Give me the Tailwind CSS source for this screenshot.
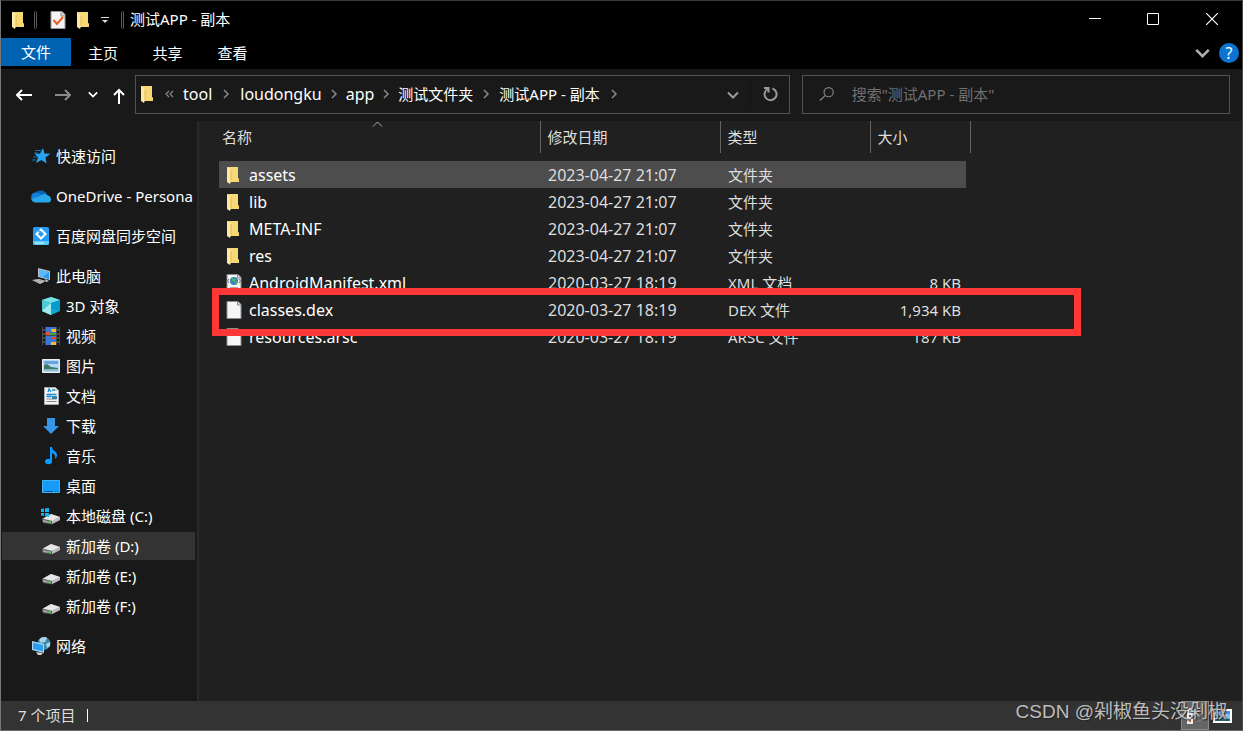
<!DOCTYPE html>
<html lang="zh-CN">
<head>
<meta charset="utf-8">
<title>测试APP - 副本</title>
<script src="https://cdn.jsdelivr.net/npm/@tailwindcss/browser@4"></script>
</head>
<body class="bg-[#191919] text-white text-[15px] leading-5 font-['Noto_Sans','Noto_Sans_CJK_SC',sans-serif]">
<svg class="hidden">
  <symbol id="folder" viewBox="0 0 14 18"><path d="M1 1h11v11l1 1v3H3z" fill="#f3cf68"/><path d="M4 1h8v11l1 1v3H4z" fill="#f8d775"/><path d="M1 1l4 2v12l-1 3-3-2z" fill="#ffe9a2"/><path d="M5 4v11" stroke="#e4b94e"/></symbol>
  <symbol id="sep" viewBox="0 0 8 10"><path d="M2 1l4 4-4 4" fill="none" stroke="#8a8a8a" stroke-width="1.5"/></symbol>
  <symbol id="down" viewBox="0 0 12 8"><path d="M1 1.500l5 5 5-5" fill="none" stroke="currentColor" stroke-width="2"/></symbol>
  <symbol id="page" viewBox="0 0 16 18"><path d="M1 .5h11l3 3v14H1z" fill="#f5f6f6" stroke="#8d8d8d"/><path d="M11.500 1v3H15" fill="#ddd" stroke="#8d8d8d"/></symbol>
  <symbol id="drive" viewBox="0 0 18 12"><path d="M0 6L9 1l9 3v3l-8 4-9-2z" fill="#8c8c8c"/><path d="M1 5.500L9 1l9 3-8 4z" fill="#e6e6e8"/><path d="M0 6l10 2v3.500L1 10z" fill="#55585a"/><path d="M1 7l8 1.500v2L1 9z" fill="#a5a8a8"/><path d="M5 9l3 .5" stroke="#22d52b" stroke-width="1.500"/><path d="M10 8l8-4v3l-8 4z" fill="#bdbdc0"/></symbol>
</svg>
<div class="flex min-h-screen flex-col border border-t-[#3a3a3a] border-r-[#4a4a4a] border-b-[#686868] border-l-[#777]">
  <header class="bg-black">
    <div class="flex h-[37px] items-center">
      <svg class="ml-[10px] h-[18px] w-[14px]"><use href="#folder"/></svg>
      <span class="ml-[9px] h-[18px] w-[3px] rounded border border-[#5c5c5c]"></span>
      <button aria-label="属性" class="ml-[13px]"><svg class="h-[18px] w-4" viewBox="0 0 16 18"><path d="M1 .5h11l3 3v14H1z" fill="#f4f4f6" stroke="#999"/><path d="M11 1v4h4" fill="#ccc" stroke="#999"/><path d="M3.500 9l3.500 4 6-7" fill="none" stroke="#f05a1a" stroke-width="2"/></svg></button>
      <button aria-label="新建文件夹" class="ml-[10px]"><svg class="h-[18px] w-[14px]"><use href="#folder"/></svg></button>
      <button aria-label="自定义快速访问工具栏" class="ml-[11px]"><svg class="h-2 w-2" viewBox="0 0 8 8"><path d="M0 1.500h8" stroke="#ddd"/><path d="M1 4h6L4 7z" fill="#ddd"/></svg></button>
      <span class="ml-3 h-[18px] w-[3px] rounded border border-[#5c5c5c]"></span>
      <h1 class="ml-[6px] pb-[2px]">测试APP - 副本</h1>
      <div class="ml-auto flex h-full pb-px">
        <button aria-label="最小化" class="flex w-[58px] items-center justify-center"><svg class="size-3" viewBox="0 0 12 12"><path d="M0 5.500h12" stroke="#fff"/></svg></button>
        <button aria-label="最大化" class="flex w-[58px] items-center justify-center"><svg class="size-3" viewBox="0 0 12 12"><path d="M.5.5h11v11H.5z" fill="none" stroke="#fff"/></svg></button>
        <button aria-label="关闭" class="flex w-[60px] items-center justify-center"><svg class="size-3" viewBox="0 0 12 12"><path d="M0 0l12 12M12 0L0 12" stroke="#fff" stroke-width="1.200"/></svg></button>
      </div>
    </div>
    <nav class="flex h-[31px] items-start" aria-label="功能区">
      <button class="h-7 w-[70px] bg-[#0063b1]">文件</button>
      <button class="h-[30px] w-16">主页</button>
      <button class="h-[30px] w-[65px]">共享</button>
      <button class="h-[30px] w-[65px]">查看</button>
      <button aria-label="展开功能区" class="ml-auto h-[30px] text-[#b0b0b0]"><svg class="h-[10px] w-[15px]" viewBox="0 0 12 8"><use href="#down"/></svg></button>
      <button aria-label="帮助" class="mt-[5px] mr-[3px] ml-[9px]"><span class="flex size-5 items-center justify-center rounded-full bg-[#0b74d1] text-base">?</span></button>
    </nav>
  </header>

  <div class="flex h-[52px] items-start pt-[6px] pr-3">
    <div class="flex h-[39px] w-[134px] shrink-0 items-center">
      <button aria-label="后退" class="ml-[15px]"><svg class="h-3 w-4" viewBox="0 0 16 12" fill="none" stroke="#fff" stroke-width="2"><path d="M16 6H1M6 1L1 6l5 5"/></svg></button>
      <button aria-label="前进" class="ml-[23px]"><svg class="h-3 w-4" viewBox="0 0 16 12" fill="none" stroke="#8a8a8a" stroke-width="2"><path d="M0 6h15M10 1l5 5-5 5"/></svg></button>
      <button aria-label="最近浏览的位置" class="ml-[17px]"><svg class="h-[7px] w-[10px]"><use href="#down"/></svg></button>
      <button aria-label="上移" class="ml-[15px]"><svg class="mt-[3px] h-4 w-3" viewBox="0 0 12 16" fill="none" stroke="#fff" stroke-width="2"><path d="M6 16V2M1 7l5-5 5 5"/></svg></button>
    </div>
    <div class="flex h-[39px] flex-1 items-center border border-[#535353] pb-[2px]">
      <svg class="ml-1 h-[18px] w-[14px]"><use href="#folder"/></svg>
      <svg class="ml-[11px] h-2 w-[9px]" viewBox="0 0 9 8" fill="none" stroke="#8a8a8a" stroke-width="1.200"><path d="M4 1L1 4l3 3M8 1L5 4l3 3"/></svg>
      <a href="#" class="ml-[9px] text-base">tool</a>
      <svg class="mx-[10px] h-[10px] w-2"><use href="#sep"/></svg>
      <a href="#" class="text-base">loudongku</a>
      <svg class="mx-2 h-[10px] w-2"><use href="#sep"/></svg>
      <a href="#" class="text-base">app</a>
      <svg class="mx-2 h-[10px] w-2"><use href="#sep"/></svg>
      <a href="#">测试文件夹</a>
      <svg class="mx-[9px] h-[10px] w-2"><use href="#sep"/></svg>
      <a href="#">测试APP - 副本</a>
      <svg class="mx-[10px] h-[10px] w-2"><use href="#sep"/></svg>
      <button aria-label="以前的位置" class="ml-auto flex h-full w-9 items-center justify-center border-r border-[#151515] text-[#999]"><svg class="mt-[2px] h-2 w-3"><use href="#down"/></svg></button>
      <button aria-label="刷新" class="flex h-full w-[38px] items-center justify-center"><svg class="h-4 w-[15px]" viewBox="0 0 15 16" fill="none" stroke="#999" stroke-width="2"><path d="M9.500 2.500a6 6 0 1 1-5 .5M1 2h4.500v4.500"/></svg></button>
    </div>
    <label class="ml-3 flex h-[39px] w-[428px] items-center border border-[#535353] pb-[2px] pl-4">
      <svg class="h-4 w-[17px]" viewBox="0 0 17 16" fill="none" stroke="#858585" stroke-width="1.300"><circle cx="10.500" cy="6" r="5"/><path d="M7 9.500L1 15"/></svg>
      <input aria-label="搜索" class="ml-[17px] w-full bg-transparent outline-none placeholder:text-[#707070]" placeholder='搜索"测试APP - 副本"'>
    </label>
  </div>

  <div class="flex flex-1">
    <nav aria-label="导航窗格" class="flex w-[194px] shrink-0 flex-col gap-[2px] pt-[21px] whitespace-nowrap *:flex *:h-7 *:items-center">
      <a href="#" class="mb-[10px] pl-[30px]"><svg class="mr-[5px] h-5 w-5 shrink-0" viewBox="0 0 20 20"><path d="M12 2l1.500 5.500 6 .3-5 3.700 1 6-5-3.500-5.500 3 2-5.500-3.500-4 5.500.3z" fill="#27a4f2"/><path d="M4 4.500h6M3 7h4M2 11h4M1 14h4" stroke="#1377bd"/></svg>快速访问</a>
      <a href="#" class="mb-[10px] pl-[30px]"><svg class="mr-[5px] h-5 w-5 shrink-0" viewBox="0 0 20 20"><path d="M4 7a7 6 0 0 1 12 1l-6 6z" fill="#0a62b5"/><path d="M4 16a4.800 4.800 0 0 1 1-9.500c4 0 8 4 11 9.500z" fill="#1180d6"/><path d="M4 16.500c-2-.5-3.500-2-3.500-3.500L9 10c3-3 6-2.500 8-.5 4 1 4 7 0 7z" fill="#28a8ea"/></svg>OneDrive - Persona</a>
      <a href="#" class="mb-[10px] pl-[30px]"><svg class="mr-[5px] h-5 w-5 shrink-0" viewBox="0 0 20 20"><rect x="2" y="1" width="16" height="18" rx="1.500" fill="#279cf5"/><path d="M2 15h16v2a2 2 0 0 1-2 2H4a2 2 0 0 1-2-2z" fill="#55c9f7"/><path d="M10 3.500L14.500 8 10 12.500 5.500 8z" fill="none" stroke="#fff" stroke-width="2"/><path d="M7 4l3 3" stroke="#279cf5" stroke-width="1.500"/><path d="M4 17h9" stroke="#e5faff"/></svg>百度网盘同步空间</a>
      <a href="#" class="pl-[30px]"><svg class="mr-[5px] h-5 w-5 shrink-0" viewBox="0 0 20 20"><path d="M7 2l12 3v9L7 11z" fill="#b7c4cf"/><path d="M8 3.500l10 2.500v7L8 10z" fill="#2799ec"/><path d="M8 3.500l10 2.500-6 5-4-1z" fill="#5ab9f6"/><path d="M1 14l7-1 7 2-6 3zM14 13l4 2-3 1z" fill="#c9cdd1"/><path d="M3 14.500l7 2M6 13.500l7 2" stroke="#999"/></svg>此电脑</a>
      <a href="#" class="pl-10"><svg class="mr-[5px] h-5 w-5 shrink-0" viewBox="0 0 20 20"><path d="M1 4l9-3 9 3v11l-9 4-9-4z" fill="#15a9cf"/><path d="M1 4l9-3 9 3-9 3z" fill="#7ce1e5"/><path d="M1 4l9 3v12l-9-4z" fill="#4bc9d5"/><path d="M1 15l9-8v12z" fill="#a0e9ec"/><path d="M19 4v11l-9-2V7z" fill="#079bd0"/></svg>3D 对象</a>
      <a href="#" class="pl-10"><svg class="mr-[5px] h-5 w-5 shrink-0" viewBox="0 0 20 20"><path d="M1 1h18v18H1z" fill="#4a4a4a"/><path d="M3 1v18M17 1v18" stroke="#161616" stroke-width="2" stroke-dasharray="2 2"/><path d="M5 1h10v8H5zM5 10h10v9H5z" fill="#3c77d3"/><path d="M10 3h5v3h-4zM10 16h5v3h-5z" fill="#f2bd28"/><path d="M5 6h4v3H5zM11 11h3v2h-3z" fill="#ef4b32"/><path d="M9 7h6v2H9z" fill="#39a83d"/></svg>视频</a>
      <a href="#" class="pl-10"><svg class="mr-[5px] h-5 w-5 shrink-0" viewBox="0 0 20 20"><path d="M1.500 3.500h17v13h-17z" fill="#b5d9f2" stroke="#eee"/><path d="M3 5h14v3H3z" fill="#6ca3da"/><path d="M3 9l3-1 4 3 7 1v1H3z" fill="#3c7865"/><path d="M3 13h14v2H3z" fill="#8fb9c4"/></svg>图片</a>
      <a href="#" class="pl-10"><svg class="mr-[5px] h-5 w-5 shrink-0" viewBox="0 0 20 20"><path d="M3.500 1.500h11l3 3v14h-14z" fill="#f3f3f3" stroke="#aaa"/><path d="M14 2v3h3" fill="#ccc"/><path d="M7 6l1-3 2 3M11 4h3M5.500 8.500h10M5.500 10.500h5" fill="none" stroke="#1487d3" stroke-width="1.300"/><path d="M5.500 13h10M5.500 15.500h10" stroke="#888"/><path d="M11 10h5v3h-5z" fill="#397fac"/></svg>文档</a>
      <a href="#" class="pl-10"><svg class="mr-[5px] h-5 w-5 shrink-0" viewBox="0 0 20 20"><path d="M6 2h8v8h4l-8 8-8-8h4z" fill="#3695e6"/></svg>下载</a>
      <a href="#" class="pl-10"><svg class="mr-[5px] h-5 w-5 shrink-0" viewBox="0 0 20 20"><ellipse cx="7.500" cy="15.500" rx="3.500" ry="2.700" fill="#0b9aff"/><path d="M9 1h2c0 4 5 4 5 8 0 2-1 3-2 4 1-4-1-5-3-6v9H9z" fill="#0b9aff"/></svg>音乐</a>
      <a href="#" class="pl-10"><svg class="mr-[5px] h-5 w-5 shrink-0" viewBox="0 0 20 20"><path d="M1.500 4.500h17v12h-17z" fill="#159cfa" stroke="#45b3f7"/><path d="M3 15.500h9M14 15.500h1M16 15.500h1" stroke="#08578e"/></svg>桌面</a>
      <a href="#" class="pl-10"><svg class="mr-[5px] h-5 w-5 shrink-0" viewBox="0 0 20 20"><svg x="1" y="7" width="18" height="12"><use href="#drive"/></svg><path d="M0 3l3-.5V6H0zM4 2.300L8 2v4H4zM0 7h3v3l-3-.5zM4 7h4v4l-4-.7z" fill="#12b4ed"/></svg>本地磁盘 (C:)</a>
      <a href="#" aria-current="true" class="ml-[1px] bg-[#333] pl-[39px]"><svg class="mr-[5px] h-5 w-5 shrink-0" viewBox="0 0 20 20"><svg x="1" y="7" width="18" height="12"><use href="#drive"/></svg></svg>新加卷 (D:)</a>
      <a href="#" class="pl-10"><svg class="mr-[5px] h-5 w-5 shrink-0" viewBox="0 0 20 20"><svg x="1" y="7" width="18" height="12"><use href="#drive"/></svg></svg>新加卷 (E:)</a>
      <a href="#" class="mb-[10px] pl-10"><svg class="mr-[5px] h-5 w-5 shrink-0" viewBox="0 0 20 20"><svg x="1" y="7" width="18" height="12"><use href="#drive"/></svg></svg>新加卷 (F:)</a>
      <a href="#" class="pl-[30px]"><svg class="mr-[5px] h-5 w-5 shrink-0" viewBox="0 0 20 20"><circle cx="13" cy="7.500" r="6.500" fill="#3f88ae"/><path d="M8 4c3-4 7-3 8-2l-2 4-4 1zM15 8l4-2v4l-3 2z" fill="#a9d5e6"/><path d="M1 5l12 3v9L1 14z" fill="#add9f4"/><path d="M2 6.500L12 9v6.500L2 13z" fill="#2c9ef0"/><path d="M5 16l7 1-2 2H7z" fill="#d0d3d6"/></svg>网络</a>
    </nav>
    <main class="ml-[2px] min-w-0 flex-1 border-l-2 border-[#292929] bg-[#202020] pl-5">
      <table class="w-[751px] table-fixed border-collapse text-left">
        <colgroup><col class="w-[321px]"><col class="w-[180px]"><col class="w-[150px]"><col class="w-[96px]"><col class="w-[4px]"></colgroup>
        <thead class="text-[#dedede]">
          <tr class="h-8 *:border-r *:border-[#636363] *:p-0 *:font-normal">
            <th class="relative"><span class="pl-[3px]">名称</span><svg class="absolute top-0 left-[153px] h-[6px] w-[11px]" viewBox="0 0 11 6"><path d="M1 5.500L5.500 1 10 5.500" fill="none" stroke="#aaa"/></svg></th>
            <th><span class="pl-[7px]">修改日期</span></th><th><span class="pl-[7px]">类型</span></th><th colspan="2"><span class="pl-[7px]">大小</span></th>
          </tr>
          <tr aria-hidden="true" class="h-2"><td colspan="5" class="p-0"></td></tr>
        </thead>
        <tbody class="text-[#dedede] *:h-[27px] [&_td]:p-0">
          <tr class="*:not-last:bg-[#4d4d4d]"><td><a href="#" class="flex items-center gap-2 pl-[7px] text-base text-white"><svg class="h-[18px] w-[14px]"><use href="#folder"/></svg><span class="pl-[1px]">assets</span></a></td><td class="pl-2! text-base">2023-04-27 21:07</td><td class="pl-2!">文件夹</td><td></td><td></td></tr>
          <tr><td><a href="#" class="flex items-center gap-2 pl-[7px] text-base text-white"><svg class="h-[18px] w-[14px]"><use href="#folder"/></svg><span class="pl-[1px]">lib</span></a></td><td class="pl-2! text-base">2023-04-27 21:07</td><td class="pl-2!">文件夹</td><td></td><td></td></tr>
          <tr><td><a href="#" class="flex items-center gap-2 pl-[7px] text-base text-white"><svg class="h-[18px] w-[14px]"><use href="#folder"/></svg><span class="pl-[1px]">META-INF</span></a></td><td class="pl-2! text-base">2023-04-27 21:07</td><td class="pl-2!">文件夹</td><td></td><td></td></tr>
          <tr><td><a href="#" class="flex items-center gap-2 pl-[7px] text-base text-white"><svg class="h-[18px] w-[14px]"><use href="#folder"/></svg><span class="pl-[1px]">res</span></a></td><td class="pl-2! text-base">2023-04-27 21:07</td><td class="pl-2!">文件夹</td><td></td><td></td></tr>
          <tr><td><a href="#" class="flex items-center gap-[7px] pl-[7px] text-base text-white"><svg class="h-[18px] w-4" viewBox="0 0 16 18"><use href="#page"/><circle cx="8" cy="7" r="4" fill="#3484c5"/><path d="M6 4l4 1-1 3-3-1zM9 8l3-1-2 4z" fill="#4db858"/><path d="M3 5L1.500 7 3 9M13 5l1.500 2L13 9" fill="none" stroke="#777"/><path d="M4 13.500h8M4 15.500h8" stroke="#a5a8b0"/></svg>AndroidManifest.xml</a></td><td class="pl-2! text-base">2020-03-27 18:19</td><td class="pl-2!">XML 文档</td><td class="pr-[5px]! text-right">8 KB</td><td></td></tr>
          <tr><td class="relative"><a href="#" class="flex items-center gap-[7px] pl-[7px] text-base text-white"><svg class="h-[18px] w-4"><use href="#page"/></svg>classes.dex</a><span class="pointer-events-none absolute -top-2 -left-[7px] z-10 h-12 w-[869px] border-[7px] border-[#ff3737]"></span></td><td class="pl-2! text-base">2020-03-27 18:19</td><td class="pl-2!">DEX 文件</td><td class="pr-[5px]! text-right">1,934 KB</td><td></td></tr>
          <tr><td><a href="#" class="flex items-center gap-[7px] pl-[7px] text-base text-white"><svg class="h-[18px] w-4"><use href="#page"/></svg>resources.arsc</a></td><td class="pl-2! text-base">2020-03-27 18:19</td><td class="pl-2!">ARSC 文件</td><td class="pr-[5px]! text-right">187 KB</td><td></td></tr>
        </tbody>
      </table>
    </main>
  </div>

  <footer class="relative flex h-[29px] items-center bg-[#333] text-[#dedede]">
    <span class="ml-[17px] pb-[2px]">7 个项目</span><span class="ml-3 h-[13px] w-px bg-white"></span>
    <button aria-label="详细信息" class="ml-auto flex h-full w-7 items-center border border-[#888] bg-[#656565] pl-[5px]"><svg class="h-4 w-4" viewBox="0 0 16 16"><path d="M0 0h6v16H0z" fill="#eee"/><path d="M2 2h2v3H2z" fill="#438ad0"/><path d="M2 7h2v2H2z" fill="#444"/><path d="M2 11h2v3H2z" fill="#e0552c"/><path d="M8 3h6M8 8h6M8 13h6" stroke="#858585"/></svg></button>
    <button aria-label="大缩略图" class="mr-[10px] ml-1"><svg class="h-[14px] w-[19px]" viewBox="0 0 19 14"><path d="M1 1h17v12H1z" fill="#86c0ee" stroke="#fff" stroke-width="2"/><path d="M2 2h15v3H2z" fill="#4b8de0"/><path d="M2 8l4-2 5 3 6 1v2H2z" fill="#2d6a78"/></svg></button>
    <span class="pointer-events-none absolute right-[15px] bottom-[6px] text-[19px] leading-6 whitespace-nowrap text-[#bdbdbd] font-['Liberation_Sans','Noto_Sans_CJK_SC',sans-serif] text-shadow-[1px_1px_1px_#222]">CSDN @剁椒鱼头没剁椒</span>
  </footer>
</div>
</body>
</html>
